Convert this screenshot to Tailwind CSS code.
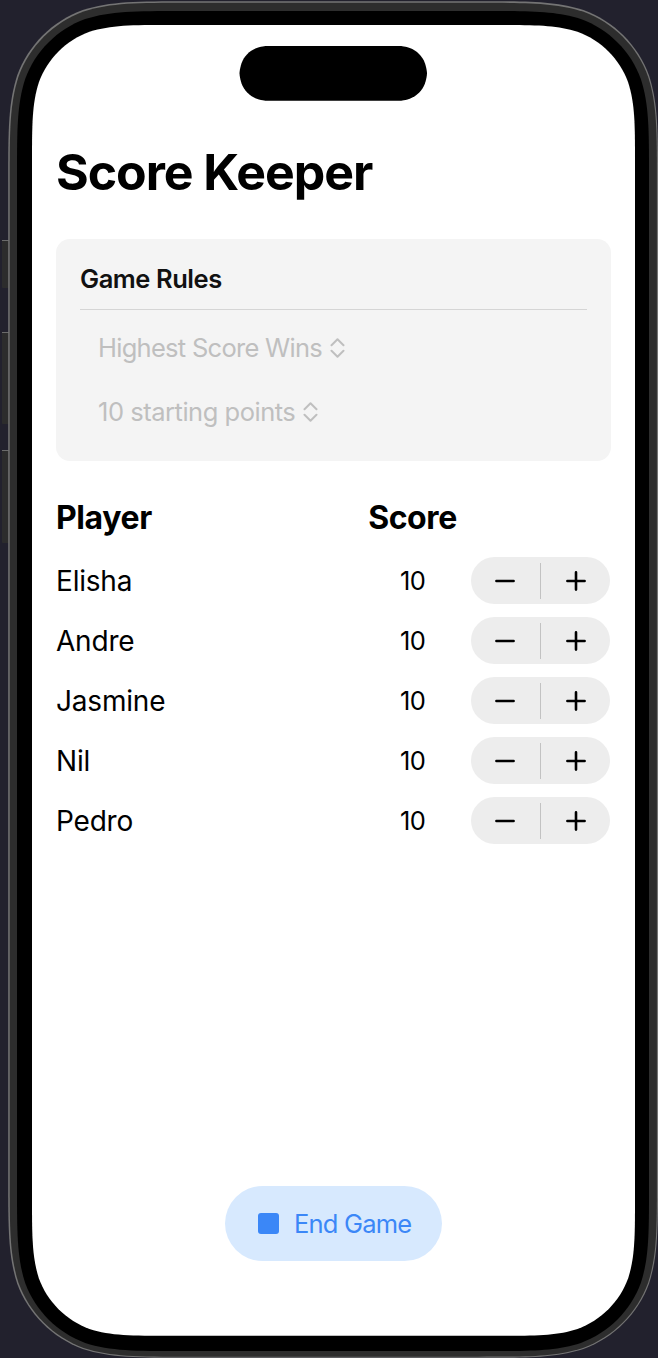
<!DOCTYPE html>
<html lang="en">
<head>
<meta charset="utf-8">
<title>Score Keeper</title>
<script src="https://cdn.jsdelivr.net/npm/@tailwindcss/browser@4"></script>
</head>
<body class="relative h-[1358px] w-[658px] overflow-hidden bg-[#22212d] font-['Inter',sans-serif] text-black">
<!-- Device frame -->
<svg class="absolute inset-0" width="658" height="1358" viewBox="0 0 658 1358" aria-hidden="true">
  <g fill="#2c2c2c">
    <rect x="2" y="240" width="8" height="48" rx="1"/>
    <rect x="2" y="332" width="8" height="92" rx="1"/>
    <rect x="2" y="450" width="8" height="93" rx="1"/>
  </g>
  <g fill="#6b6b6b">
    <rect x="2" y="240" width="7" height="1"/>
    <rect x="2" y="332" width="7" height="1"/>
    <rect x="2" y="450" width="7" height="1"/>
  </g>
  <path data-box="8.2 1.2 649.8 1356.6 118" fill="#747474"/>
  <path data-box="9.7 2.8 647.2 1353.9 117" fill="#2d2d2d"/>
  <path data-box="17 11 632 1340 108" fill="#000"/>
  <path data-box="32 25 603 1310.7 91" fill="#fff"/>
  <path data-box="239.5 46 187.5 54.7 27.3" fill="#000"/>
</svg>

<main class="relative flex h-full flex-col pl-14 pr-[47px] pt-[142px]">
  <h1 class="h-[60px] whitespace-nowrap text-[50px] font-bold leading-[60px] tracking-[-1.05px]">Score Keeper</h1>

  <section class="mt-[37px] flex h-[222px] flex-col rounded-[14px] bg-[#f4f4f4] px-6 pt-[23px]">
    <h2 class="h-12 border-b border-[#d5d5d5] text-[25.5px] font-semibold leading-[33px] tracking-[-0.45px] text-[#111]">Game Rules</h2>
    <div class="mt-[22px] flex h-8 items-center gap-2 pl-[18px] text-[25.5px] text-[#bfbfbf]">
      <span class="tracking-[-0.72px]">Highest Score Wins</span>
      <svg width="15" height="20" viewBox="0 0 15 20" fill="none" stroke="currentColor" stroke-width="2" stroke-linecap="round" stroke-linejoin="round"><path d="M1.5 7.2 7.5 1.2l6 6M1.5 12.8l6 6 6-6"/></svg>
    </div>
    <div class="mt-8 flex h-8 items-center gap-2 pl-[18px] text-[25.5px] text-[#bfbfbf]">
      <span class="tracking-[-0.48px]">10 starting points</span>
      <svg width="15" height="20" viewBox="0 0 15 20" fill="none" stroke="currentColor" stroke-width="2" stroke-linecap="round" stroke-linejoin="round"><path d="M1.5 7.2 7.5 1.2l6 6M1.5 12.8l6 6 6-6"/></svg>
    </div>
  </section>

  <section class="mt-[33px] text-[28px]">
    <div class="grid h-10 grid-cols-[298px_117px_139px] items-center text-[32px] font-bold tracking-[-0.4px]">
      <span>Player</span><span class="text-center">Score</span>
    </div>
    <div id="players" class="mt-[23px] flex flex-col gap-3"></div>
  </section>

  <button class="mt-[341px] flex h-[75px] w-[217px] shrink-0 items-center gap-[15px] self-center rounded-full bg-[#d7e9fe] pl-[33px] text-[25.5px] text-[#3b87f7]">
    <span class="size-[21px] shrink-0 rounded-[3px] bg-[#3b87f7]"></span><span class="whitespace-nowrap pt-0.5 tracking-[-0.8px]">End Game</span>
  </button>
</main>

<template id="row">
  <div class="grid h-12 grid-cols-[298px_117px_139px] items-center">
    <span class="name tracking-[-0.2px]"></span>
    <span class="text-center text-[25.5px] tracking-[-0.8px]">10</span>
    <div class="-mt-px flex h-[47.5px] items-center rounded-full bg-[#ededed]">
      <button class="flex flex-1 justify-center"><svg width="20" height="20" viewBox="0 0 20 20" stroke="#000" stroke-width="2.6" stroke-linecap="round"><path d="M1.4 10h17.2"/></svg></button>
      <span class="h-9 w-[1.5px] bg-[#c2c2c2]"></span>
      <button class="flex flex-1 justify-center"><svg width="20" height="20" viewBox="0 0 20 20" stroke="#000" stroke-width="2.6" stroke-linecap="round"><path d="M1.4 10h17.2M10 1.4v17.2"/></svg></button>
    </div>
  </div>
</template>

<script>
// Rectangle with continuous-curvature corners of radius r.
function smoothRect(x, y, w, h, r) {
  const e = Math.min(1.528665, Math.min(w, h) / 2 / r);
  const s = e < 1.5 ? [1, 0.86] : [1.088493, 0.868407];
  const corner = (cx, cy, ux, uy, flip) => {
    let p = [[e, 0], [s[0], 0], [s[1], 0], [0.631494, 0.074911], [0.372824, 0.16906], [0.16906, 0.372824], [0.074911, 0.631494], [0, s[1]], [0, s[0]], [0, e]];
    if (flip) p.reverse();
    return p.map(([a, b]) => (cx + ux * a * r).toFixed(2) + ' ' + (cy + uy * b * r).toFixed(2));
  };
  const all = [corner(x, y, 1, 1, true), corner(x + w, y, -1, 1, false), corner(x + w, y + h, -1, -1, true), corner(x, y + h, 1, -1, false)];
  return all.map((p, i) => (i ? 'L' : 'M') + p[0] + 'C' + p.slice(1).join(' ')).join('') + 'Z';
}
document.querySelectorAll('[data-box]').forEach(p => p.setAttribute('d', smoothRect(...p.dataset.box.split(' ').map(Number))));

for (const name of ['Elisha', 'Andre', 'Jasmine', 'Nil', 'Pedro']) {
  const row = document.getElementById('row').content.cloneNode(true);
  row.querySelector('.name').textContent = name;
  document.getElementById('players').append(row);
}
</script>
</body>
</html>
